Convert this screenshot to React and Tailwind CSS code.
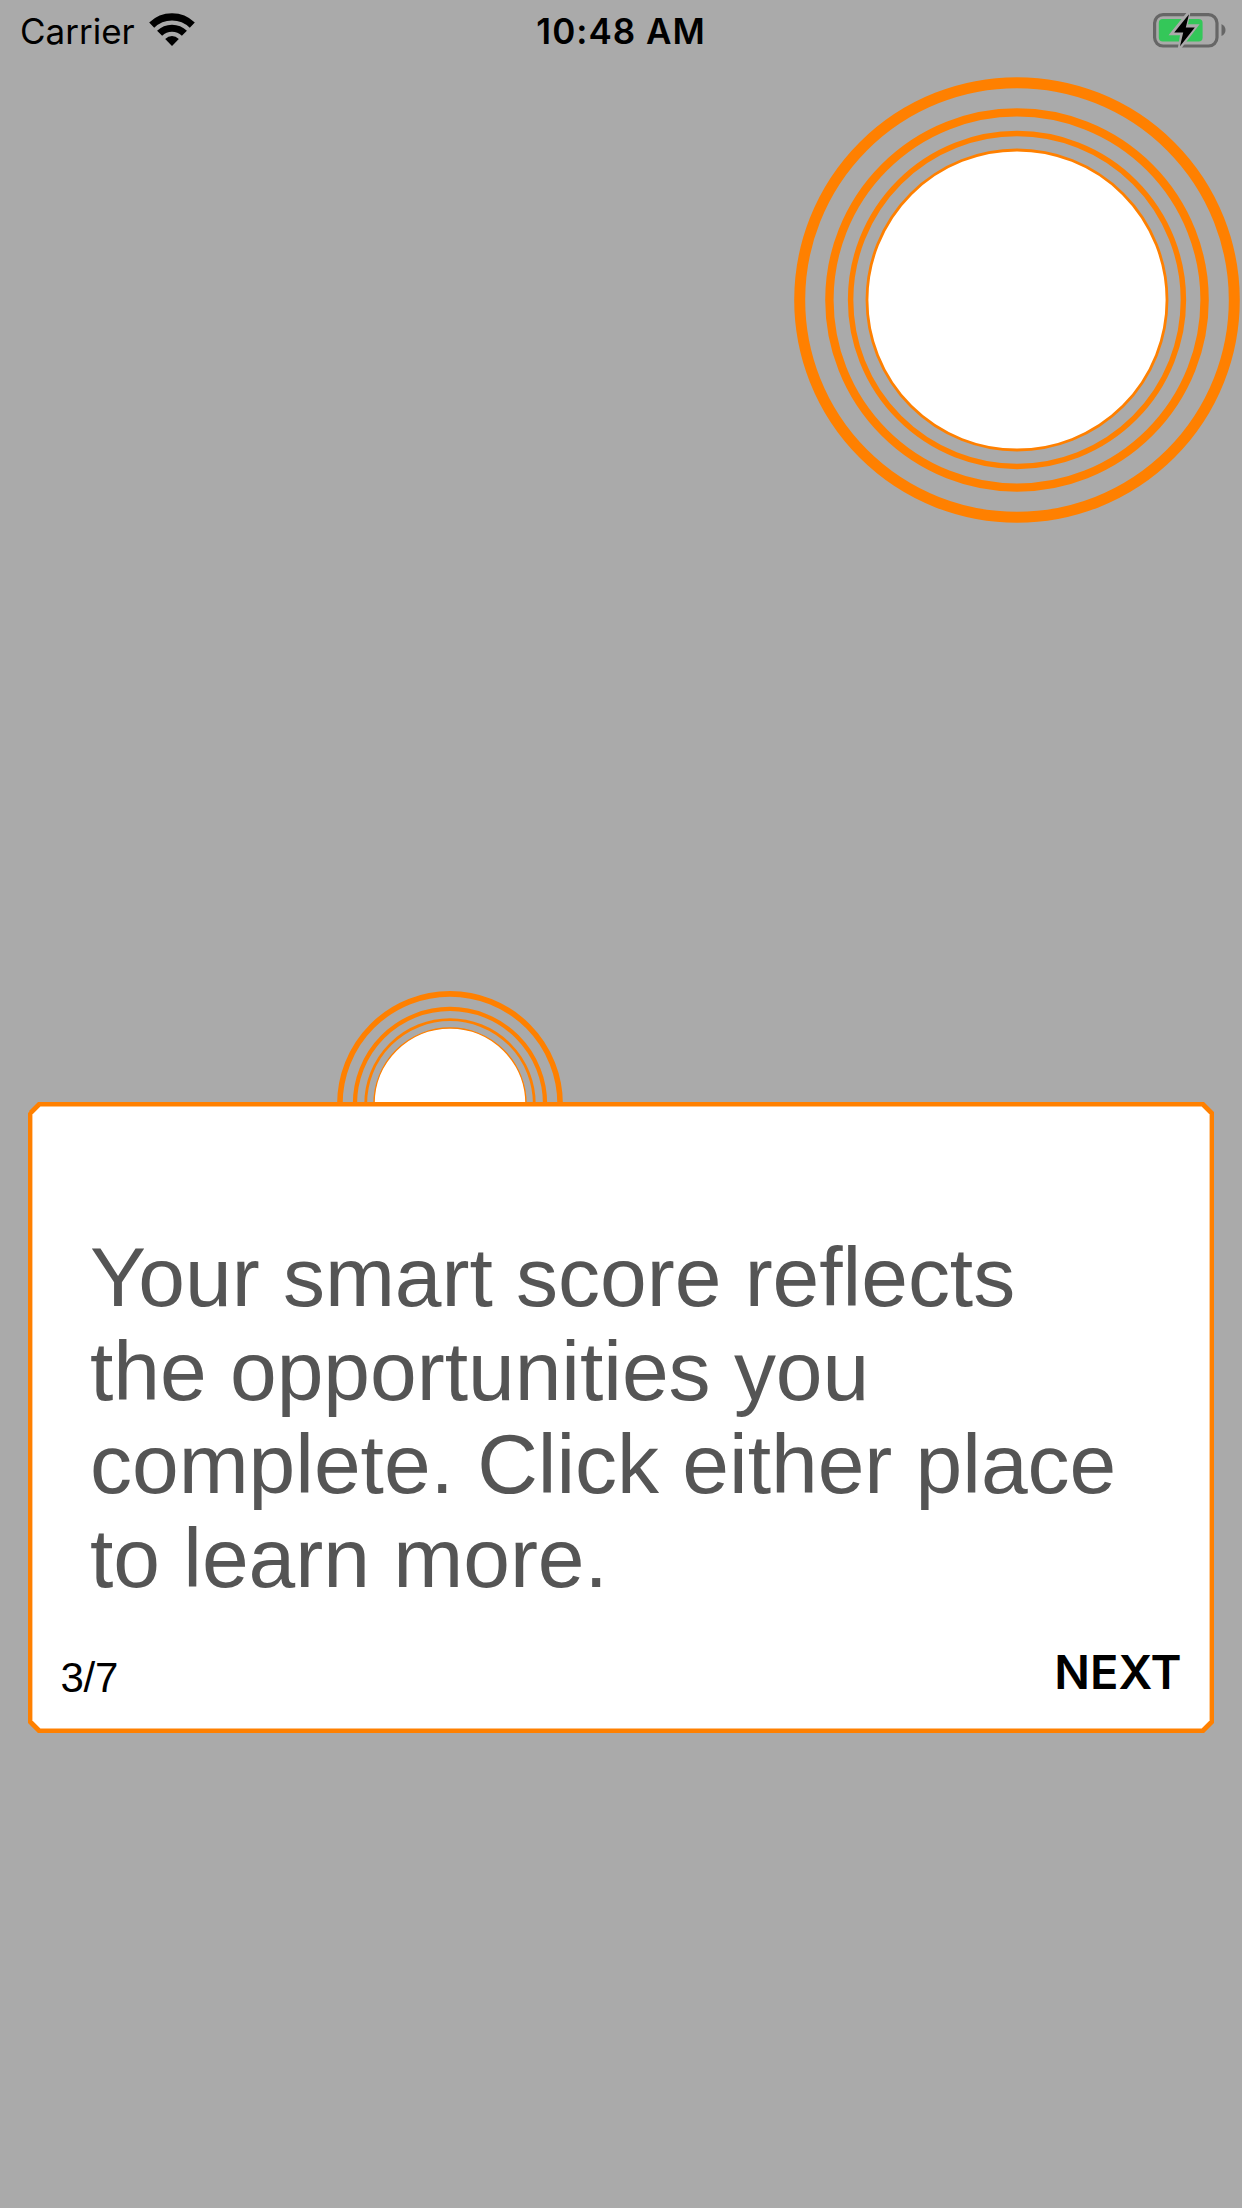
function WifiIcon() {
  return (
    <svg className="mb-[2px] ml-[14px] h-[36px] w-[46px]" viewBox="0 0 46 36" fill="none">
      <g stroke="#000" strokeWidth="7.2">
        <path d="M2.7 13.1A29.1 29.1 0 0 1 43.3 13.1" />
        <path d="M10.6 21.3A17.7 17.7 0 0 1 35.4 21.3" />
      </g>
      <path d="M23 34L16.2 27.1Q19.2 24.1 23 24.1T29.8 27.1Z" fill="#000" />
    </svg>
  );
}

function BatteryIcon() {
  return (
    <svg className="-mr-1 mb-[2px] h-[40px] w-[77px]" viewBox="0 0 77 40" fill="none">
      <rect x="5.6" y="4.6" width="62.4" height="31.4" rx="8.5" stroke="#666" strokeWidth="3.2" />
      <path d="M72.5 14Q76.5 16 76.5 20T72.5 26Z" fill="#666" />
      <rect x="9.8" y="9" width="43.8" height="22.4" rx="4" fill="#34c759" />
      <path
        d="M38.6 1.5L19.5 25.2H31L28.6 39.5H31.5L50.6 14.2H39L41.6 1.5Z"
        fill="#aaa"
      />
      <path d="M40 4.2L25.2 22.4H34.2L31 36.3L45.8 17.6H36.8Z" fill="#000" />
    </svg>
  );
}

function StatusBar() {
  return (
    <header className="flex h-[62px] items-center justify-between px-5 font-[Inter,sans-serif] text-[35px] leading-[62px] text-black">
      <div className="flex flex-1 items-center">
        <span>Carrier</span>
        <WifiIcon />
      </div>
      <span className="font-semibold tracking-[1px] whitespace-nowrap">10:48 AM</span>
      <div className="flex flex-1 justify-end">
        <BatteryIcon />
      </div>
    </header>
  );
}

function Spotlight({ className }) {
  return (
    <svg className={className} viewBox="0 0 446 446" fill="none" stroke="#ff8000">
      <circle cx="223" cy="223" r="217.3" strokeWidth="11" />
      <circle cx="223" cy="223" r="187.6" strokeWidth="8.4" />
      <circle cx="223" cy="223" r="166.4" strokeWidth="5.5" />
      <circle cx="223" cy="223" r="150" strokeWidth="2.8" fill="#fff" />
    </svg>
  );
}

export default function App() {
  return (
    <main className="relative flex h-[2208px] w-[1242px] flex-col overflow-hidden bg-[#aaaaaa]">
      <StatusBar />
      <Spotlight className="absolute top-[77px] left-[794px] size-[446px]" />
      <Spotlight className="absolute top-[991px] left-[337px] size-[226px]" />

      <section className="relative mx-7 mt-[1040px] h-[631px] bg-[#ff8000] p-1 [clip-path:polygon(10px_0,1176px_0,100%_10px,100%_621px,1176px_100%,10px_100%,0_621px,0_11px,1.5px_9.5px,1px_9px)]">
        <div className="flex h-full flex-col justify-between bg-white pt-[125px] [clip-path:polygon(8.4px_0.4px,1169.6px_0.4px,1177.6px_8.4px,1177.6px_614.6px,1169.6px_622.6px,8.4px_622.6px,0.4px_614.6px,0.4px_8.4px)]">
          <p className="pl-[58px] font-['Liberation_Sans',Arial,sans-serif] text-[84px] leading-[93.67px] tracking-[-0.03px] text-[#555555]">
            Your smart score reflects
            <br />
            the opportunities you
            <br />
            complete. Click either place
            <br />
            to learn more.
          </p>
          <div className="flex items-baseline justify-between pr-[28.5px] pb-[26px] pl-[28.5px] text-black">
            <span className="font-['Liberation_Sans',Arial,sans-serif] text-[42px] leading-[48px] tracking-[-0.3px]">
              3/7
            </span>
            <button className="relative -top-[3px] font-[Inter,sans-serif] text-[47px] leading-[56px] font-semibold">
              NEXT
            </button>
          </div>
        </div>
      </section>
    </main>
  );
}
